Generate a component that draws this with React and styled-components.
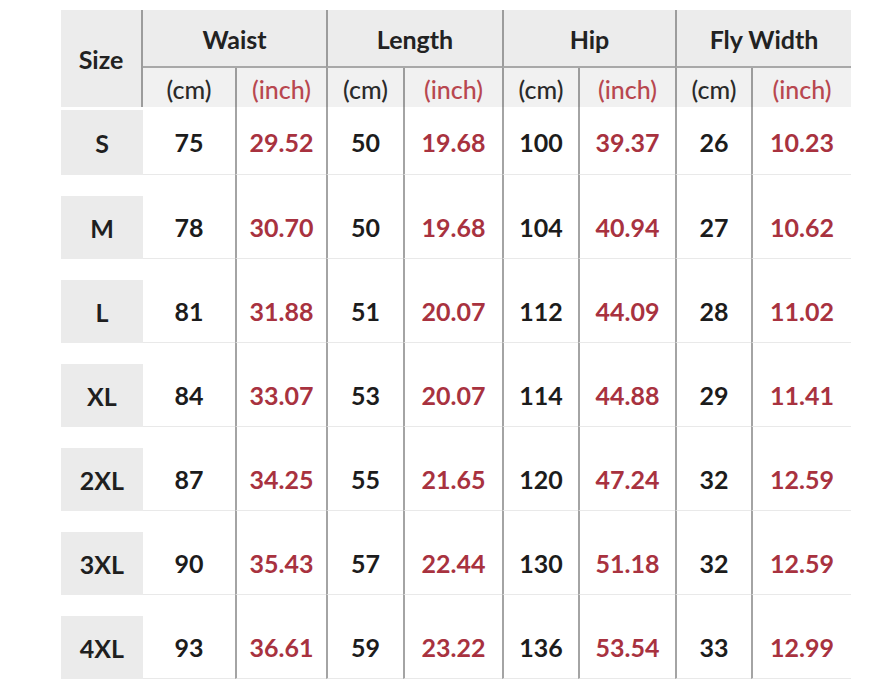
import React from "react";
import styled, { createGlobalStyle } from "styled-components";

const Global = createGlobalStyle`
  html, body { margin: 0; padding: 0; background: #ffffff; }
  body { font-family: Lato, "Open Sans", "Liberation Sans", sans-serif; }
`;

const Page = styled.div`
  padding: 10px 0 0 61px;
  width: 878px;
  height: 682px;
  box-sizing: border-box;
  overflow: hidden;
`;

const Table = styled.div`
  display: grid;
  grid-template-columns: 82px 92px 91px 77px 99px 76px 97px 76px 100px;
  grid-template-rows: 58px 39px 68px repeat(6, 84px);
  width: 792px;
`;

const Cell = styled.div`
  box-sizing: border-box;
  display: flex;
  align-items: center;
  justify-content: center;
  white-space: nowrap;
`;

const SizeHead = styled(Cell)`
  grid-row: 1 / span 2;
  background: #ececec;
  border-right: 2px solid #9c9c9c;
  font-weight: 700;
  font-size: 25px;
  color: #222222;
  padding-top: 1px;
`;

const GroupHead = styled(Cell)`
  grid-column: span 2;
  background: #ececec;
  border-bottom: 2px solid #a8a8a8;
  border-left: ${(p) => (p.$first ? "none" : "2px solid #9c9c9c")};
  font-weight: 700;
  font-size: 25px;
  color: #222222;
  padding-top: 2px;
`;

const Unit = styled(Cell)`
  background: #f1f1f1;
  border-left: ${(p) => (p.$line ? "2px solid #9c9c9c" : "none")};
  font-size: 25px;
  font-weight: 500;
  color: ${(p) => (p.$inch ? "#b8474f" : "#2a2a2a")};
  padding-top: 2px;
`;

const Value = styled(Cell)`
  background: #ffffff;
  border-left: ${(p) => (p.$line ? "2px solid #a4a4a4" : "none")};
  border-bottom: 1px solid #e9e9e9;
  padding-top: ${(p) => (p.$first ? "3px" : "21px")};
  font-size: 25px;
  font-weight: 700;
  color: ${(p) => (p.$inch ? "#a8323f" : "#1c1c1c")};
`;

const SizeSlot = styled.div`
  box-sizing: border-box;
  padding-top: ${(p) => (p.$first ? "3px" : "21px")};
  display: flex;
`;

const SizeBox = styled(Cell)`
  flex: 1;
  background: #ebebeb;
  font-size: 25px;
  font-weight: 700;
  color: #1f1f1f;
`;

const groups = ["Waist", "Length", "Hip", "Fly Width"];

const rows = [
  ["S", 75, "29.52", 50, "19.68", 100, "39.37", 26, "10.23"],
  ["M", 78, "30.70", 50, "19.68", 104, "40.94", 27, "10.62"],
  ["L", 81, "31.88", 51, "20.07", 112, "44.09", 28, "11.02"],
  ["XL", 84, "33.07", 53, "20.07", 114, "44.88", 29, "11.41"],
  ["2XL", 87, "34.25", 55, "21.65", 120, "47.24", 32, "12.59"],
  ["3XL", 90, "35.43", 57, "22.44", 130, "51.18", 32, "12.59"],
  ["4XL", 93, "36.61", 59, "23.22", 136, "53.54", 33, "12.99"],
];

export default function App() {
  return (
    <>
      <Global />
      <Page>
        <Table>
          <SizeHead>Size</SizeHead>
          {groups.map((g, i) => (
            <GroupHead key={g} $first={i === 0}>
              {g}
            </GroupHead>
          ))}
          {groups.map((g, i) => (
            <React.Fragment key={g + "u"}>
              <Unit $line={i !== 0}>(cm)</Unit>
              <Unit $inch $line>
                (inch)
              </Unit>
            </React.Fragment>
          ))}
          {rows.map((r, ri) => (
            <React.Fragment key={r[0]}>
              <SizeSlot $first={ri === 0}>
                <SizeBox>{r[0]}</SizeBox>
              </SizeSlot>
              {r.slice(1).map((v, ci) => (
                <Value
                  key={ci}
                  $first={ri === 0}
                  $inch={ci % 2 === 1}
                  $line={ci !== 0}
                >
                  {v}
                </Value>
              ))}
            </React.Fragment>
          ))}
        </Table>
      </Page>
    </>
  );
}
